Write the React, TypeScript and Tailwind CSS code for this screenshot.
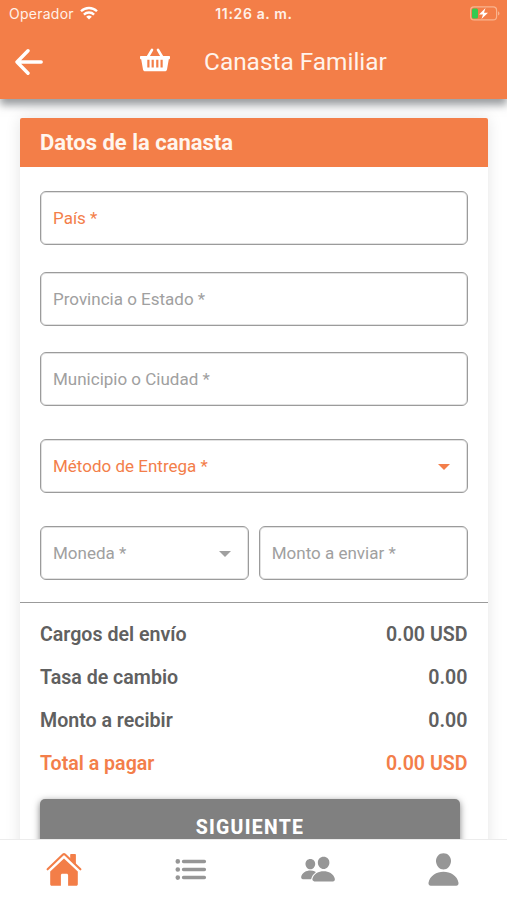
import { IoList, IoPeople, IoPerson } from "react-icons/io5";

const summary = [
  { label: "Cargos del envío", value: "0.00 USD" },
  { label: "Tasa de cambio", value: "0.00" },
  { label: "Monto a recibir", value: "0.00" },
  { label: "Total a pagar", value: "0.00 USD", highlight: true },
];

const tabs = [
  { name: "Inicio", icon: HouseIcon, active: true, size: "h-[34px] w-9 ml-0.5" },
  { name: "Lista", icon: IoList, active: false, size: "size-[37px]" },
  { name: "Contactos", icon: IoPeople, active: false, size: "size-9 ml-0.5" },
  { name: "Perfil", icon: IoPerson, active: false, size: "size-[37px] -ml-px" },
];

function HouseIcon({ className }: { className?: string }) {
  return (
    <svg viewBox="0 0 36 34" className={className} fill="currentColor">
      <path
        d="M1.6 17.3 17 2.6q1-.9 2 0L34.4 17.3"
        fill="none"
        stroke="currentColor"
        strokeWidth="2.1"
        strokeLinecap="round"
      />
      <path d="M24.2 7V3c0-.6.4-1 1-1h3.700c.6 0 1 .4 1 1v9.500z" />
      <path d="M18 6.500 31.800 19.600v12.600c0 .9-.6 1.500-1.500 1.500h-8.200V23.300c0-.9-.6-1.500-1.500-1.500h-4.200c-.9 0-1.500.6-1.500 1.500v10.400H5.700c-.9 0-1.500-.6-1.500-1.500V19.600z" />
    </svg>
  );
}

function Field({
  label,
  highlight = false,
  select = false,
  className = "",
}: {
  label: string;
  highlight?: boolean;
  select?: boolean;
  className?: string;
}) {
  return (
    <div
      className={`flex h-[54px] items-center justify-between rounded-[6px] border border-[#9b9b9b] bg-white pr-[17px] pl-3 shadow-[inset_0_0_0_1px_#e2e2e2] ${
        highlight ? "text-[#f37e4a]" : "text-[#a0a0a0]"
      } ${className}`}
    >
      <span className="pt-px text-[17px] leading-none whitespace-nowrap">{label}</span>
      {select && (
        <svg viewBox="0 0 12 6" className="mt-0.5 h-1.5 w-3" fill="currentColor">
          <path d="M0 0h12L6 6z" />
        </svg>
      )}
    </div>
  );
}

function StatusBar() {
  return (
    <div className="grid h-7 grid-cols-3 items-center pr-[7px] pl-[9px] font-['Inter',sans-serif] text-[14px] text-[#fff1e8]">
      <div className="flex items-center gap-1.5">
        <span className="-mt-0.5 tracking-[0.25px]">Operador</span>
        <svg viewBox="0 0 18 14" className="-mt-0.5 h-3.5 w-[18px]" fill="none" stroke="white" strokeWidth="2.3">
          <path d="M1 5.3a11.4 11.4 0 0 1 16 0" />
          <path d="M3.9 8.6a7.2 7.2 0 0 1 10.2 0" />
          <path d="M9 13.6 6.2 10.8a4 4 0 0 1 5.6 0z" fill="white" stroke="none" />
        </svg>
      </div>
      <span className="-mt-0.5 -ml-px text-center font-semibold tracking-[0.65px] whitespace-nowrap">
        11:26 a. m.
      </span>
      <svg viewBox="0 0 30 15" className="-mt-px h-[15px] w-[30px] justify-self-end" fill="none">
        <rect x="0.6" y="0.9" width="26" height="13" rx="3.5" stroke="#f9b48f" strokeWidth="1.2" />
        <path d="M28 5.2c2 .8 2 3.6 0 4.4z" fill="#f9b48f" />
        <rect x="2" y="2.4" width="6" height="10" rx="1.5" fill="#35ca50" />
        <path d="M15.5 2 9 8.4h4L11.5 13 18 6.8h-4z" fill="white" />
      </svg>
    </div>
  );
}

function BasketIcon() {
  return (
    <svg viewBox="0 0 30 24" className="h-6 w-[30px]" fill="white">
      <path
        d="M7.5 9.5 12 1.8M22.5 9.5 18 1.8"
        stroke="white"
        strokeWidth="2.6"
        strokeLinecap="round"
      />
      <path
        fillRule="evenodd"
        d="M1 8h28c.7 0 1 .4 1 1v1c0 .8-.4 1.2-1.2 1.3L27 21.4c-.2 1.2-1 1.8-2.2 1.8H5.2c-1.2 0-2-.6-2.2-1.8L1.2 11.3C.4 11.2 0 10.8 0 10V9c0-.6.3-1 1-1zM7.3 11.8v7.8h2.200v-7.800zM11.600 11.800v7.800h2.200v-7.800zM16.200 11.800v7.800h2.200v-7.800zM20.500 11.800v7.800h2.200v-7.800z"
      />
    </svg>
  );
}

export default function App() {
  return (
    <div className="flex h-[900px] w-[507px] flex-col overflow-hidden bg-white font-['Roboto',sans-serif]">
      <header className="relative z-10 h-[99px] shrink-0 bg-[#f37e48] shadow-[0_6px_8px_rgba(70,75,80,0.55)]">
        <StatusBar />
        <div className="flex h-[68px] items-center pl-[15px]">
          <svg
            viewBox="0 0 28 26"
            className="h-[26px] w-7"
            fill="none"
            stroke="white"
            strokeWidth="3.4"
            strokeLinecap="round"
            strokeLinejoin="round"
          >
            <path d="M13 1.8 2 13l11 11.2M2.5 13h23.7" />
          </svg>
          <div className="ml-[97px] -mt-1">
            <BasketIcon />
          </div>
          <h1 className="ml-[34px] text-[24.4px] leading-none text-[#fff3eb]">Canasta Familiar</h1>
        </div>
      </header>

      <main className="min-h-0 flex-1 overflow-hidden px-5 pt-[19px]">
        <section className="h-[760px] w-[467.5px] rounded-[2px] bg-white shadow-[0_0_16px_rgba(0,0,0,0.11)]">
          <h2 className="flex h-[49px] items-center rounded-t-[2px] bg-[#f37e48] px-5 text-[22px] font-bold text-[#fff6ee]">
            Datos de la canasta
          </h2>
          <div className="flex flex-col px-5 pt-6">
            <Field label="País *" highlight />
            <Field label="Provincia o Estado *" className="mt-[26.5px]" />
            <Field label="Municipio o Ciudad *" className="mt-[26.5px]" />
            <Field label="Método de Entrega *" highlight select className="mt-[33px]" />
            <div className="mt-[33px] grid grid-cols-2 gap-2.5">
              <Field label="Moneda *" select />
              <Field label="Monto a enviar *" />
            </div>
          </div>
          <div className="mt-[22px] border-t border-[#9b9b9b]" />
          <dl className="px-5 pt-[10.5px]">
            {summary.map((row) => (
              <div
                key={row.label}
                className={`flex h-[42.8px] items-center justify-between text-[19.6px] font-semibold ${
                  row.highlight ? "text-[#f37e4a]" : "text-[#606060]"
                }`}
              >
                <dt>{row.label}</dt>
                <dd>{row.value}</dd>
              </div>
            ))}
          </dl>
          <button className="mt-[14px] ml-5 block h-[57px] w-[420px] rounded-[5px] bg-[#808080] text-[19.4px] font-extrabold tracking-[1.3px] text-white shadow-[0_2px_7px_rgba(0,0,0,0.5)]">
            SIGUIENTE
          </button>
        </section>
      </main>

      <nav className="relative z-10 grid h-[61px] shrink-0 grid-cols-4 border-t border-[#ececec] bg-white pb-0.5">
        {tabs.map((tab) => (
          <button
            key={tab.name}
            aria-label={tab.name}
            className={`flex items-center justify-center ${
              tab.active ? "text-[#f37e48]" : "text-[#969696]"
            }`}
          >
            <tab.icon className={tab.size} />
          </button>
        ))}
      </nav>
    </div>
  );
}
